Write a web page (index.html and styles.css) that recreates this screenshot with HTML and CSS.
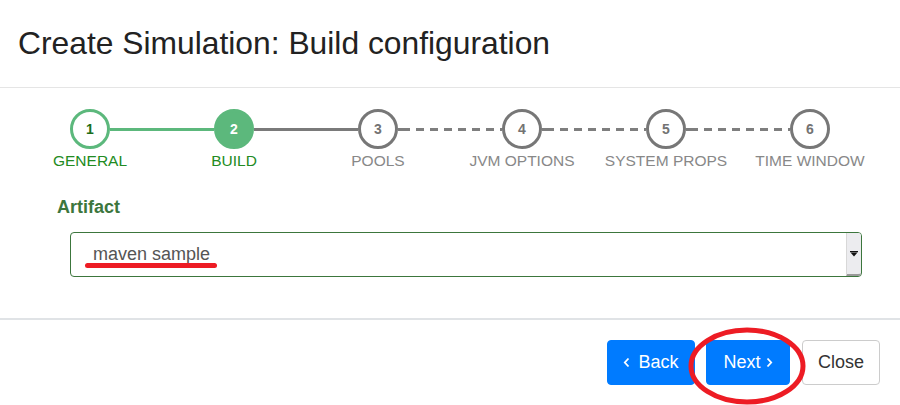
FILE: index.html
```html
<!DOCTYPE html>
<html lang="en">
<head>
<meta charset="utf-8">
<title>Create Simulation</title>
<link rel="stylesheet" href="styles.css">
</head>
<body>
<div class="modal">
  <header class="modal-header">
    <h4 class="modal-title">Create Simulation: Build configuration</h4>
  </header>
  <section class="modal-body">
    <ol class="stepper">
      <li class="step done link-green"><span class="dot">1</span><span class="label">GENERAL</span></li>
      <li class="step active link-grey"><span class="dot">2</span><span class="label">BUILD</span></li>
      <li class="step link-dash"><span class="dot">3</span><span class="label">POOLS</span></li>
      <li class="step link-dash"><span class="dot">4</span><span class="label">JVM OPTIONS</span></li>
      <li class="step link-dash"><span class="dot">5</span><span class="label">SYSTEM PROPS</span></li>
      <li class="step"><span class="dot">6</span><span class="label">TIME WINDOW</span></li>
    </ol>
    <div class="form-group">
      <label class="control-label">Artifact</label>
      <div class="select">
        <span class="value">maven sample</span>
        <span class="drop">
          <svg width="8" height="6" viewBox="0 0 8 6"><rect x="0" y="0" width="8" height="1.2" fill="#111"/><path d="M0.5 1.5 H7.5 L4 5.5 Z" fill="#111"/></svg>
        </span>
        <span class="annot-underline"></span>
      </div>
    </div>
  </section>
  <footer class="modal-footer">
    <button class="btn btn-primary btn-back">
      <svg class="chev" width="7" height="11" viewBox="0 0 7 11"><path d="M5.5 1.5 L1.8 5.5 L5.5 9.5" fill="none" stroke="#fff" stroke-width="1.8"/></svg>
      Back
    </button>
    <button class="btn btn-primary btn-next">
      Next
      <svg class="chev" width="7" height="11" viewBox="0 0 7 11"><path d="M1.5 1.5 L5.2 5.5 L1.5 9.5" fill="none" stroke="#fff" stroke-width="1.8"/></svg>
    </button>
    <button class="btn btn-default">Close</button>
    <svg class="annot-ellipse" width="124" height="84" viewBox="0 0 124 84"><ellipse cx="62" cy="42" rx="56" ry="36" fill="none" stroke="#ed1c24" stroke-width="5"/></svg>
  </footer>
</div>
</body>
</html>
```

FILE: styles.css
```css
* { box-sizing: border-box; }
html, body {
  margin: 0;
  padding: 0;
  background: #fff;
}
body {
  font-family: "Liberation Sans", Arial, sans-serif;
  color: #212529;
  width: 900px;
  height: 405px;
  overflow: hidden;
}
.modal {
  width: 900px;
}
.modal-header {
  height: 88px;
  border-bottom: 1px solid #e5e5e5;
  padding: 24px 0 0 18px;
}
.modal-title {
  margin: 0;
  font-weight: normal;
  font-size: 31.8px;
  line-height: 38px;
  color: #222;
}
.modal-body {
  padding: 21px 0 0 0;
  height: 230px;
}
.stepper {
  list-style: none;
  margin: 0 0 0 18px;
  padding: 0;
  display: grid;
  grid-template-columns: repeat(6, 144px);
}
.step {
  position: relative;
  display: flex;
  flex-direction: column;
  align-items: center;
}
.step::after {
  content: "";
  position: absolute;
  top: 18.5px;
  left: calc(50% + 20px);
  width: calc(100% - 40px);
  height: 3px;
}
.step:last-child::after { display: none; }
.link-green::after { background: #5cb87c; }
.link-grey::after { background: #7a7a7a; }
.link-dash::after {
  background: repeating-linear-gradient(90deg, #7e7e7e 0 8px, transparent 8px 14px);
  background-position: 4px 0;
}
.dot {
  width: 40px;
  height: 40px;
  border-radius: 50%;
  border: 3px solid #777;
  display: flex;
  align-items: center;
  justify-content: center;
  font-weight: bold;
  font-size: 14px;
  color: #737373;
  background: #fff;
}
.done .dot {
  border-color: #5cb87c;
  color: #1a6e1a;
}
.active .dot {
  background: #5cb87c;
  border-color: #5cb87c;
  color: #fff;
}
.label {
  margin-top: 3px;
  font-size: 15.5px;
  line-height: 18px;
  color: #888;
  white-space: nowrap;
}
.done .label, .active .label {
  color: #228b22;
}
.form-group {
  margin-top: 26px;
  display: flex;
  flex-direction: column;
}
.control-label {
  margin-left: 57px;
  font-weight: bold;
  font-size: 18px;
  line-height: 22px;
  color: #3c763d;
}
.select {
  position: relative;
  margin: 14px 38px 0 70px;
  height: 45px;
  border: 1px solid #3c763d;
  border-radius: 4px;
  display: flex;
  align-items: stretch;
}
.value {
  flex: 1;
  padding-left: 22px;
  font-size: 18px;
  line-height: 43px;
  color: #555;
}
.drop {
  width: 15px;
  background: #ececef;
  border-left: 1px solid #d8d8d8;
  border-bottom: 2px solid #9a9a9a;
  border-radius: 0 3px 3px 0;
  display: flex;
  align-items: center;
  justify-content: center;
}
.annot-underline {
  position: absolute;
  left: 14px;
  top: 30px;
  width: 132px;
  height: 5px;
  border-radius: 3px;
  background: #ed1c24;
}
.modal-footer {
  position: relative;
  border-top: 2px solid #e0e3e6;
  padding: 20px 20px 0 0;
  display: flex;
  justify-content: flex-end;
}
.btn {
  height: 45px;
  font-family: "Liberation Sans", Arial, sans-serif;
  font-size: 18px;
  border-radius: 4px;
  display: inline-flex;
  align-items: center;
  justify-content: center;
  cursor: pointer;
  padding: 0;
}
.btn-primary {
  background: #007bff;
  border: 1px solid #007bff;
  color: #fff;
}
.btn-back {
  width: 88px;
  gap: 8px;
}
.btn-next {
  width: 84px;
  gap: 5px;
  margin-left: 11px;
}
.btn-default {
  width: 78px;
  margin-left: 12px;
  background: #fff;
  border: 1px solid #ccc;
  color: #333;
}
.annot-ellipse {
  position: absolute;
  left: 685px;
  top: 4px;
}
```
